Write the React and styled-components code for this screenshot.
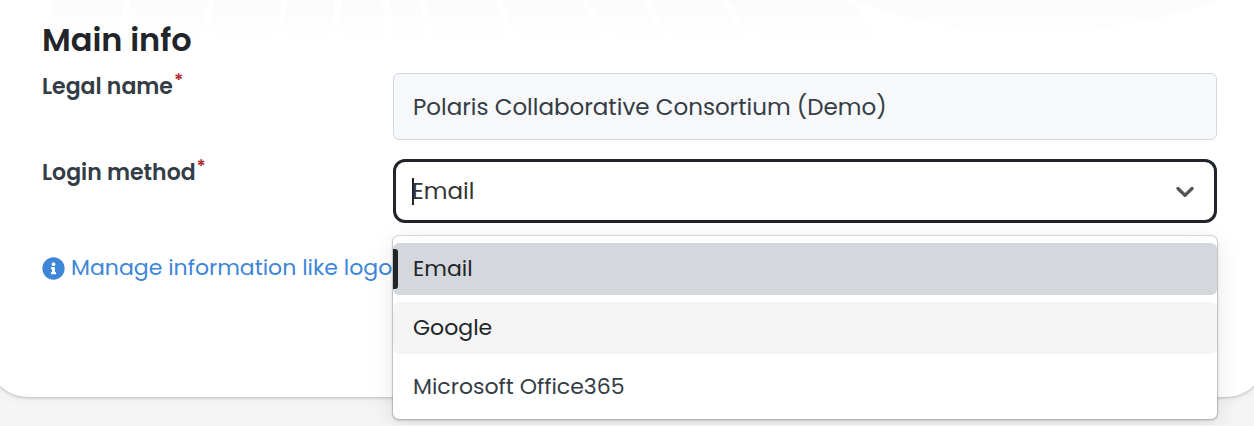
import React, { useState } from "react";
import styled, { createGlobalStyle } from "styled-components";

const OPTIONS = ["Email", "Google", "Microsoft Office365"];

const GlobalStyle = createGlobalStyle`
  * {
    box-sizing: border-box;
  }

  body {
    margin: 0;
    overflow-x: hidden;
    background: #f5f5f5;
    color: #343d46;
    font-family: Poppins, Inter, sans-serif;
    font-size: 23px;
    line-height: 32px;
    -webkit-font-smoothing: antialiased;
  }
`;

const Card = styled.main`
  position: relative;
  margin: 0 -11px 28px;
  padding: 16px 48px 109px 53px;
  border-radius: 0 0 38px 38px;
  background: #fff;
  box-shadow: 0 1px 3px rgba(0, 0, 0, 0.2), 0 4px 10px rgba(0, 0, 0, 0.04);
`;

const Backdrop = styled.svg`
  position: absolute;
  top: 0;
  left: 0;
  width: 100%;
  height: 44px;
`;

const Title = styled.h1`
  position: relative;
  margin: 0 0 9px;
  color: #212529;
  font-size: 32px;
  font-weight: 600;
  line-height: 48px;
`;

const Form = styled.form`
  display: grid;
  row-gap: 19px;
`;

const Row = styled.div`
  display: grid;
  grid-template-columns: 351px 1fr;
  align-items: start;
`;

const Label = styled.label`
  font-size: 22px;
  font-weight: 600;
  line-height: 27px;
`;

const Required = styled.sup`
  margin-left: 1px;
  color: #b02a2a;
  font-size: 18px;
  line-height: 0;
  vertical-align: 8px;
`;

const TextInput = styled.input`
  width: 100%;
  height: 67px;
  padding: 0 19px;
  border: 1px solid #d3d7dc;
  border-radius: 6px;
  background: #f7f8fa;
  color: #343d46;
  font: inherit;
`;

const Select = styled.div`
  position: relative;
`;

const Control = styled.div`
  display: flex;
  align-items: center;
  height: 64px;
  padding: 0 14px 0 16px;
  border: 3px solid #212529;
  border-radius: 12px;
  background: #fff;

  /* text cursor */
  &::before {
    content: "";
    width: 2px;
    height: 27px;
    margin-right: -2px;
    background: #212529;
  }
`;

const ComboInput = styled.input`
  flex: 1;
  min-width: 0;
  padding: 0;
  border: 0;
  outline: 0;
  background: transparent;
  color: #333;
  caret-color: transparent;
  font: inherit;
`;

const Toggle = styled.button`
  display: flex;
  padding: 0;
  border: 0;
  background: transparent;
  color: #555;
  cursor: pointer;
`;

const Menu = styled.ul`
  position: absolute;
  z-index: 2;
  top: 77px;
  left: 0;
  right: 0;
  display: grid;
  row-gap: 7px;
  margin: 0;
  padding: 7px 0 6px;
  border-radius: 6px;
  background: #fff;
  box-shadow: 0 0 0 1px rgba(0, 0, 0, 0.12), 0 1px 2px 1px rgba(0, 0, 0, 0.12),
    0 6px 24px rgba(0, 0, 0, 0.1);
  list-style: none;
`;

const Option = styled.li`
  display: flex;
  align-items: center;
  height: 52px;
  padding: 0 20px 1px 0;
  border-radius: 6px;
  background: ${(props) => (props.$selected ? "#d4d7dc" : props.$hovered ? "#f5f5f5" : "#fff")};
  color: ${(props) => (props.$selected || props.$hovered ? "#212529" : "#343d46")};
  font-size: 22px;
  line-height: 30px;
  cursor: pointer;

  &::before {
    content: "";
    width: 5px;
    height: 40px;
    margin-right: 15px;
    border-radius: 0 3px 3px 0;
    background: ${(props) => (props.$selected ? "#212529" : "transparent")};
  }
`;

const InfoLink = styled.a`
  display: inline-flex;
  align-items: center;
  gap: 6px;
  margin-top: 29px;
  color: #3d86d8;
  font-size: 22px;
  text-decoration: none;
`;

const App = () => {
  const [method, setMethod] = useState("Email");
  const [hovered, setHovered] = useState("Google");
  const [open, setOpen] = useState(true);

  function choose(option) {
    setMethod(option);
    setOpen(false);
  }

  return (
    <>
      <GlobalStyle />
      <Card>
        <Backdrop viewBox="0 0 1276 44" preserveAspectRatio="none" aria-hidden="true">
          <defs>
            <linearGradient id="fade" x2="0" y2="1">
              <stop offset="0" stopColor="#fbfbfb" />
              <stop offset="1" stopColor="#fff" />
            </linearGradient>
            <linearGradient id="blush" x2="0" y2="1">
              <stop offset="0" stopColor="#fdfbfb" />
              <stop offset="1" stopColor="#fff" />
            </linearGradient>
          </defs>
          <path d="M65 0H1230Q1120 40 1020 38Q930 34 860 0L890 40H60Z" fill="url(#fade)" />
          <path d="M65 0H222L217 40H55ZM515 0H600L625 40H530ZM870 0H970L1000 24Q920 25 870 0Z" fill="url(#blush)" />
          <g fill="none" stroke="#fff" strokeWidth="7">
            <path d="M138 0L133 44M222 0L216 44M295 0L291 44M349 0L348 44M397 0L402 44M434 0L443 44M510 0L526 44M596 0Q606 26 624 44M658 0Q668 26 688 44M736 0Q748 26 774 44" />
            <path d="M858 0Q940 36 1035 37Q1150 36 1242 0" />
          </g>
        </Backdrop>
        <Title>Main info</Title>
        <Form>
          <Row>
            <Label htmlFor="legal-name">
              Legal name<Required>*</Required>
            </Label>
            <TextInput id="legal-name" readOnly value="Polaris Collaborative Consortium (Demo)" />
          </Row>
          <Row>
            <Label htmlFor="login-method">
              Login method<Required>*</Required>
            </Label>
            <Select>
              <Control>
                <ComboInput
                  id="login-method"
                  role="combobox"
                  aria-expanded={open}
                  aria-controls="login-options"
                  readOnly
                  value={method}
                  onClick={() => setOpen(true)}
                />
                <Toggle type="button" aria-label="Toggle options" onClick={() => setOpen(!open)}>
                  <svg width="30" height="30" viewBox="0 0 20 20" fill="currentColor">
                    <path d="M4.516 7.548c0.436-0.446 1.043-0.481 1.576 0l3.908 3.747 3.908-3.747c0.533-0.481 1.141-0.446 1.574 0 0.436 0.445 0.408 1.197 0 1.615-0.406 0.418-4.695 4.502-4.695 4.502-0.217 0.223-0.502 0.335-0.787 0.335s-0.57-0.112-0.789-0.335c0 0-4.287-4.084-4.695-4.502s-0.436-1.17 0-1.615z" />
                  </svg>
                </Toggle>
              </Control>
              {open && (
                <Menu id="login-options" role="listbox">
                  {OPTIONS.map((option) => (
                    <Option
                      key={option}
                      role="option"
                      aria-selected={option === method}
                      $selected={option === method}
                      $hovered={option === hovered}
                      onMouseEnter={() => setHovered(option)}
                      onClick={() => choose(option)}
                    >
                      {option}
                    </Option>
                  ))}
                </Menu>
              )}
            </Select>
          </Row>
        </Form>
        <InfoLink href="#branding">
          <svg width="23" height="23" viewBox="0 0 512 512" fill="currentColor" aria-hidden="true">
            <path d="M256 8C119 8 8 119 8 256s111 248 248 248 248-111 248-248S393 8 256 8zm0 110c23 0 42 19 42 42s-19 42-42 42-42-19-42-42 19-42 42-42zm56 254c0 7-5 12-12 12h-88c-7 0-12-5-12-12v-24c0-7 5-12 12-12h12v-64h-12c-7 0-12-5-12-12v-24c0-7 5-12 12-12h64c7 0 12 5 12 12v100h12c7 0 12 5 12 12v24z" />
          </svg>
          Manage information like logo
        </InfoLink>
      </Card>
    </>
  );
};

export default App;
